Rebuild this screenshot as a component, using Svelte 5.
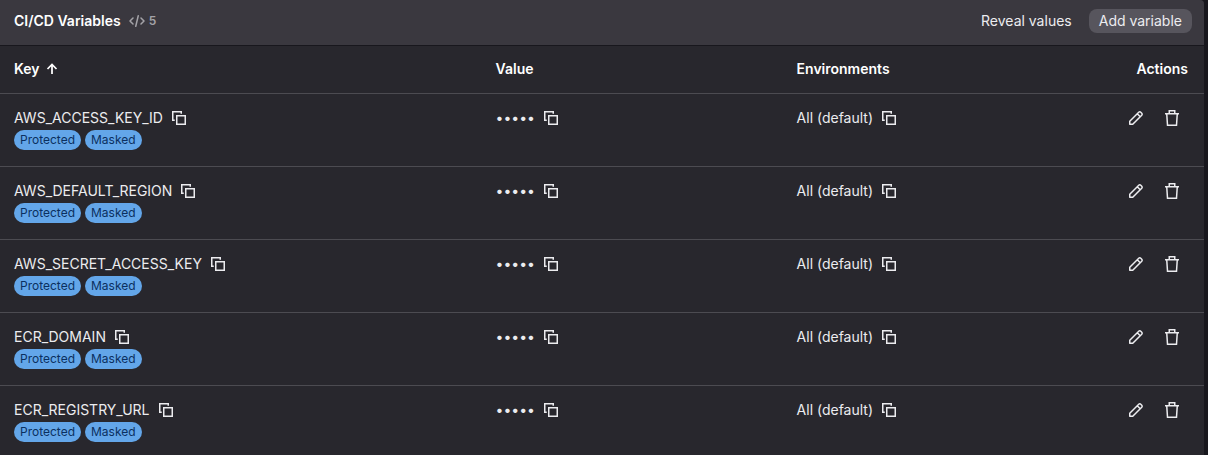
<script>
  const variables = [
    'AWS_ACCESS_KEY_ID',
    'AWS_DEFAULT_REGION',
    'AWS_SECRET_ACCESS_KEY',
    'ECR_DOMAIN',
    'ECR_REGISTRY_URL',
  ];
  const tags = ['Protected', 'Masked'];
</script>

{#snippet copyButton(label)}
  <button class="icon-button" type="button" aria-label={label}>
    <svg viewBox="0 0 16 16" fill="none" stroke="currentColor" stroke-width="1.5">
      <path d="M3.75 10.25h-2v-8.5h8.5v2" />
      <rect x="5.75" y="5.75" width="8.5" height="8.5" />
    </svg>
  </button>
{/snippet}

<section class="card">
  <header class="card-header">
    <div class="heading">
      <h2>CI/CD Variables</h2>
      <span class="count">
        <svg viewBox="0 0 16 16" fill="none" stroke="currentColor" stroke-width="1.5" stroke-linecap="round" stroke-linejoin="round" aria-hidden="true">
          <path d="M4 5 1 8l3 3M12 5l3 3-3 3M9.25 2.75l-2.5 10.5" />
        </svg>
        5
      </span>
    </div>
    <div class="header-actions">
      <button class="button" type="button">Reveal values</button>
      <button class="button filled" type="button">Add variable</button>
    </div>
  </header>

  <table>
    <colgroup>
      <col class="key-col" />
      <col class="value-col" />
      <col class="env-col" />
      <col />
    </colgroup>
    <thead>
      <tr>
        <th scope="col" aria-sort="ascending">
          <span class="sort">
            Key
            <svg viewBox="0 0 12 12" fill="none" stroke="currentColor" stroke-width="1.75" aria-hidden="true">
              <path d="M6 11V2M1.5 6 6 1.5 10.5 6" />
            </svg>
          </span>
        </th>
        <th scope="col">Value</th>
        <th scope="col">Environments</th>
        <th scope="col" class="actions-head">Actions</th>
      </tr>
    </thead>
    <tbody>
      {#each variables as name}
        <tr>
          <td>
            <div class="line"><span>{name}</span>{@render copyButton('Copy key')}</div>
            <div class="tags">
              {#each tags as tag}<span class="tag">{tag}</span>{/each}
            </div>
          </td>
          <td>
            <div class="line"><span>•••••</span>{@render copyButton('Copy value')}</div>
          </td>
          <td>
            <div class="line"><span>All (default)</span>{@render copyButton('Copy environment')}</div>
          </td>
          <td>
            <div class="line row-actions">
              <button class="icon-button" type="button" aria-label="Edit">
                <svg viewBox="0 0 16 16" fill="none" stroke="currentColor" stroke-width="1.5" stroke-linejoin="round">
                  <path d="M1.75 14.25v-3l9-9a1.4 1.4 0 0 1 2 0l1 1a1.4 1.4 0 0 1 0 2l-9 9zM9.25 3.75l3 3" />
                </svg>
              </button>
              <button class="icon-button" type="button" aria-label="Delete">
                <svg viewBox="0 0 16 16" fill="none" stroke="currentColor" stroke-width="1.5">
                  <path d="M1 3.75h14M5.25 3.5V.75h5.5V3.5M2.75 4l.75 11.25h9L13.25 4" />
                </svg>
              </button>
            </div>
          </td>
        </tr>
      {/each}
    </tbody>
  </table>
</section>

<style>
  :global(body) {
    background: #18171d;
  }

  .card {
    margin-right: 4px;
    overflow: hidden;
    border-radius: 0 4px 0 0;
    background: #28272d;
    color: #ececef;
    font: 14px/20px Inter, 'Liberation Sans', sans-serif;
  }

  .card-header {
    display: flex;
    align-items: center;
    justify-content: space-between;
    padding: 9px 12px 12px 14px;
    border-bottom: 1px solid #18171d;
    background: #3a383f;
  }

  .heading,
  .count,
  .header-actions,
  .sort,
  .line,
  .tags {
    display: flex;
    align-items: center;
  }

  .heading,
  .header-actions {
    gap: 8px;
  }

  h2 {
    margin: 0;
    color: #fff;
    font: inherit;
    font-weight: 600;
  }

  .count {
    gap: 4px;
    color: #a4a3a8;
    font-size: 12px;
    font-weight: 600;
  }

  svg {
    display: block;
    width: 16px;
    height: 16px;
  }

  button {
    margin: 0;
    border: 0;
    background: none;
    color: inherit;
    font: inherit;
    cursor: pointer;
  }

  .button {
    padding: 2px 10px;
    border-radius: 8px;
  }

  .header-actions {
    gap: 7px;
  }

  .filled {
    background: #57555d;
  }

  table {
    width: 100%;
    border-collapse: collapse;
    table-layout: fixed;
  }

  .key-col {
    width: 40%;
  }

  .value-col {
    width: 25%;
  }

  .env-col {
    width: 25%;
  }

  th,
  td {
    padding: 14px 16px 16px 14px;
    text-align: left;
    vertical-align: top;
  }

  th {
    padding-top: 13px;
    padding-bottom: 14px;
    color: #fff;
    font-weight: 600;
  }

  tr {
    border-bottom: 1px solid #4c4b51;
  }

  .sort {
    gap: 6px;
  }

  .sort svg {
    width: 12px;
    height: 12px;
  }

  .actions-head {
    text-align: right;
  }

  .line {
    gap: 8px;
    min-height: 20px;
  }

  .icon-button {
    padding: 0;
  }

  .tags {
    gap: 4px;
    margin-top: 2px;
  }

  .tag {
    padding: 2px 6px;
    border-radius: 10px;
    background: #63a6e9;
    color: #0b3060;
    font-size: 12px;
    line-height: 16px;
  }

  .row-actions {
    justify-content: flex-end;
    gap: 20px;
    padding-right: 8px;
  }
</style>
